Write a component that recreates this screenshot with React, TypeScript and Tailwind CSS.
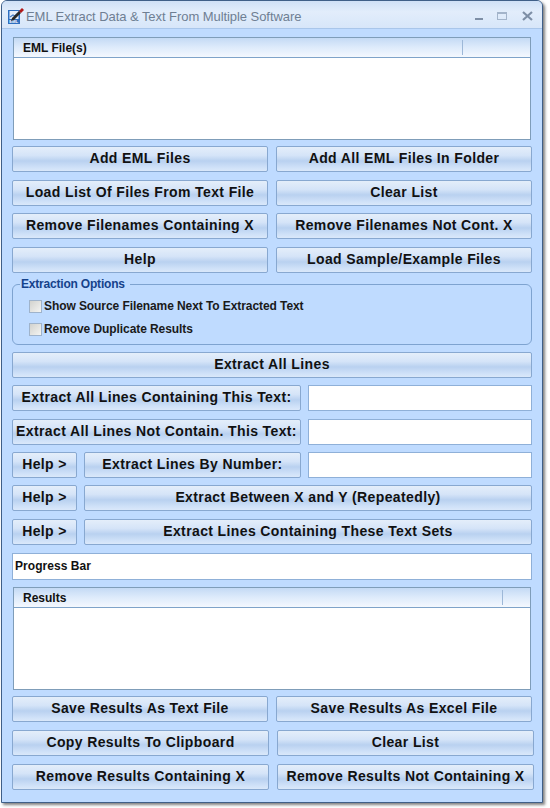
import React from 'react';

const FONT = "font-['Liberation_Sans',Arial,sans-serif]";

const Btn: React.FC<{ label: string; className?: string }> = ({ label, className = '' }) => (
  <button
    type="button"
    className={`h-[26px] shrink-0 rounded-[2px] border border-[#88a8d0] bg-[linear-gradient(180deg,#e4eefa_0%,#d5e4f8_35%,#b9d1f0_58%,#cfe1f8_85%,#dae8fa_100%)] pb-[1px] text-center text-[14px] leading-[21px] font-bold tracking-[0.38px] whitespace-nowrap text-[#111] ${className}`}
  >
    {label}
  </button>
);

const Row: React.FC<{ left: string; right: string; className?: string; wide?: boolean }> = ({ left, right, className = '', wide }) => (
  <div className={`flex gap-2 ${className}`}>
    <Btn label={left} className={wide ? 'w-[257px]' : 'w-[256px]'} />
    <Btn label={right} className={wide ? 'w-[257px]' : 'w-[256px]'} />
  </div>
);

const ListBox: React.FC<{ title: string; sep: string; className?: string }> = ({ title, sep, className = '' }) => (
  <div className={`ml-[1px] w-[518px] border border-[#7f9db9] bg-white ${className}`}>
    <div className="flex h-[20px] border-b border-[#7fa3c9] bg-[linear-gradient(180deg,#c4daf5_0%,#deebfb_50%,#f4f8fe_100%)] pl-[9px] text-[12px] leading-[21px] font-bold text-[#111]">
      <span className={sep}>{title}</span>
      <span className="my-[2px] w-px bg-[#9db8d8]" />
    </div>
    <div className="h-[81px]" />
  </div>
);

const Check: React.FC<{ label: string; className?: string }> = ({ label, className = '' }) => (
  <label className={`flex h-[14px] items-center gap-[2px] text-[12px] font-bold tracking-[-0.08px] text-[#1a1a1a] ${className}`}>
    <span className="size-[13px] border border-[#9fb3cb] bg-[linear-gradient(135deg,#d2d2ce,#f4f4f2)]" />
    {label}
  </label>
);

const Field: React.FC = () => <div className="h-[26px] w-[224px] shrink-0 border border-[#8fb0d8] bg-white" />;

const Help: React.FC = () => <Btn label="Help >" className="w-[65px]" />;

export default function App() {
  return (
    <div className={`h-[808px] w-[550px] bg-white ${FONT}`}>
      <div className="ml-[1px] flex h-[803px] w-[542px] flex-col overflow-hidden rounded-t-[6px] border border-[#3f5f88] bg-[#bfdbff] shadow-[2px_2px_3px_rgba(60,60,60,0.65)]">
        <div className="flex h-[28px] shrink-0 items-center border-b border-[#a9c6ea] bg-[linear-gradient(180deg,#cfe0f6_0%,#e2edfb_40%,#d7e6f9_100%)] pt-[5px] pl-[5px]">
          <svg width="18" height="18" viewBox="0 0 18 18" className="mt-[-2px] shrink-0">
            <rect x="1" y="3" width="12" height="14" fill="#2f6fc0" />
            <rect x="2.5" y="4" width="9" height="8" fill="#e6eefb" />
            <path d="M3 10l3-2 2 1 3-3" stroke="#4a7fc4" strokeWidth="1.2" fill="none" />
            <text x="2.2" y="16.4" fontSize="4.2" fontWeight="700" fill="#fff" fontFamily="Liberation Sans">EML</text>
            <path d="M5 11l7-7 2 2-7 7-3 1z" fill="#2a2a2a" />
            <path d="M12 4l3-3 2 2-3 3z" fill="#b01818" />
          </svg>
          <span className="ml-[1px] text-[13px] tracking-[-0.06px] text-[#6f7f93]">EML Extract Data &amp; Text From Multiple Software</span>
          <div className="mt-[-2px] ml-auto flex items-center pr-[8px]">
            <svg width="12" height="12" viewBox="0 0 12 12"><rect x="2" y="8" width="8" height="2" fill="#7e8fa6" /></svg>
            <svg width="12" height="12" viewBox="0 0 12 12" className="ml-[11px]">
              <rect x="1.5" y="2.5" width="9" height="7" fill="none" stroke="#a3b4ca" />
              <rect x="1" y="2" width="10" height="2" fill="#a3b4ca" />
            </svg>
            <svg width="13" height="12" viewBox="0 0 13 12" className="ml-[13px]">
              <path d="M2 2l9 8M11 2l-9 8" stroke="#7e8fa6" strokeWidth="2.2" />
            </svg>
          </div>
        </div>

        <div className="flex flex-col pl-[10px]">
          <ListBox title="EML File(s)" sep="w-[439px]" className="mt-[8px]" />
          <Row left="Add EML Files" right="Add All EML Files In Folder" className="mt-[6px]" />
          <Row left="Load List Of Files From Text File" right="Clear List" className="mt-[8px]" />
          <Row left="Remove Filenames Containing X" right="Remove Filenames Not Cont. X" className="mt-[7px]" />
          <Row left="Help" right="Load Sample/Example Files" className="mt-[8px]" />

          <fieldset className="mt-[4px] h-[68px] w-[520px] rounded-[6px] border border-[#7ea3d0] pl-[16px]">
            <legend className="ml-[-9px] px-[1px] pr-[5px] text-[12px] leading-[14px] font-bold tracking-[-0.2px] text-[#15428b]">Extraction Options</legend>
            <Check label="Show Source Filename Next To Extracted Text" className="mt-[8px]" />
            <Check label="Remove Duplicate Results" className="mt-[9px]" />
          </fieldset>

          <Btn label="Extract All Lines" className="mt-[7px] w-[520px]" />
          <div className="mt-[7px] flex gap-[7px]">
            <Btn label="Extract All Lines Containing This Text:" className="w-[289px]" />
            <Field />
          </div>
          <div className="mt-[8px] flex gap-[7px]">
            <Btn label="Extract All Lines Not Contain. This Text:" className="w-[289px]" />
            <Field />
          </div>
          <div className="mt-[7px] flex gap-[7px]">
            <Help />
            <Btn label="Extract Lines By Number:" className="w-[217px]" />
            <Field />
          </div>
          <div className="mt-[7px] flex gap-[7px]">
            <Help />
            <Btn label="Extract Between X and Y (Repeatedly)" className="w-[448px]" />
          </div>
          <div className="mt-[8px] flex gap-[7px]">
            <Help />
            <Btn label="Extract Lines Containing These Text Sets" className="w-[448px]" />
          </div>

          <div className="mt-[8px] h-[27px] w-[520px] border border-[#8fb0d8] bg-white pl-[2px] text-[12px] leading-[25px] font-bold tracking-[0.05px] text-[#111]">
            Progress Bar
          </div>

          <ListBox title="Results" sep="w-[479px]" className="mt-[7px]" />
          <Row left="Save Results As Text File" right="Save Results As Excel File" className="mt-[6px]" />
          <Row left="Copy Results To Clipboard" right="Clear List" className="mt-[8px]" wide />
          <Row left="Remove Results Containing X" right="Remove Results Not Containing X" className="mt-[8px]" wide />
        </div>
      </div>
    </div>
  );
}
